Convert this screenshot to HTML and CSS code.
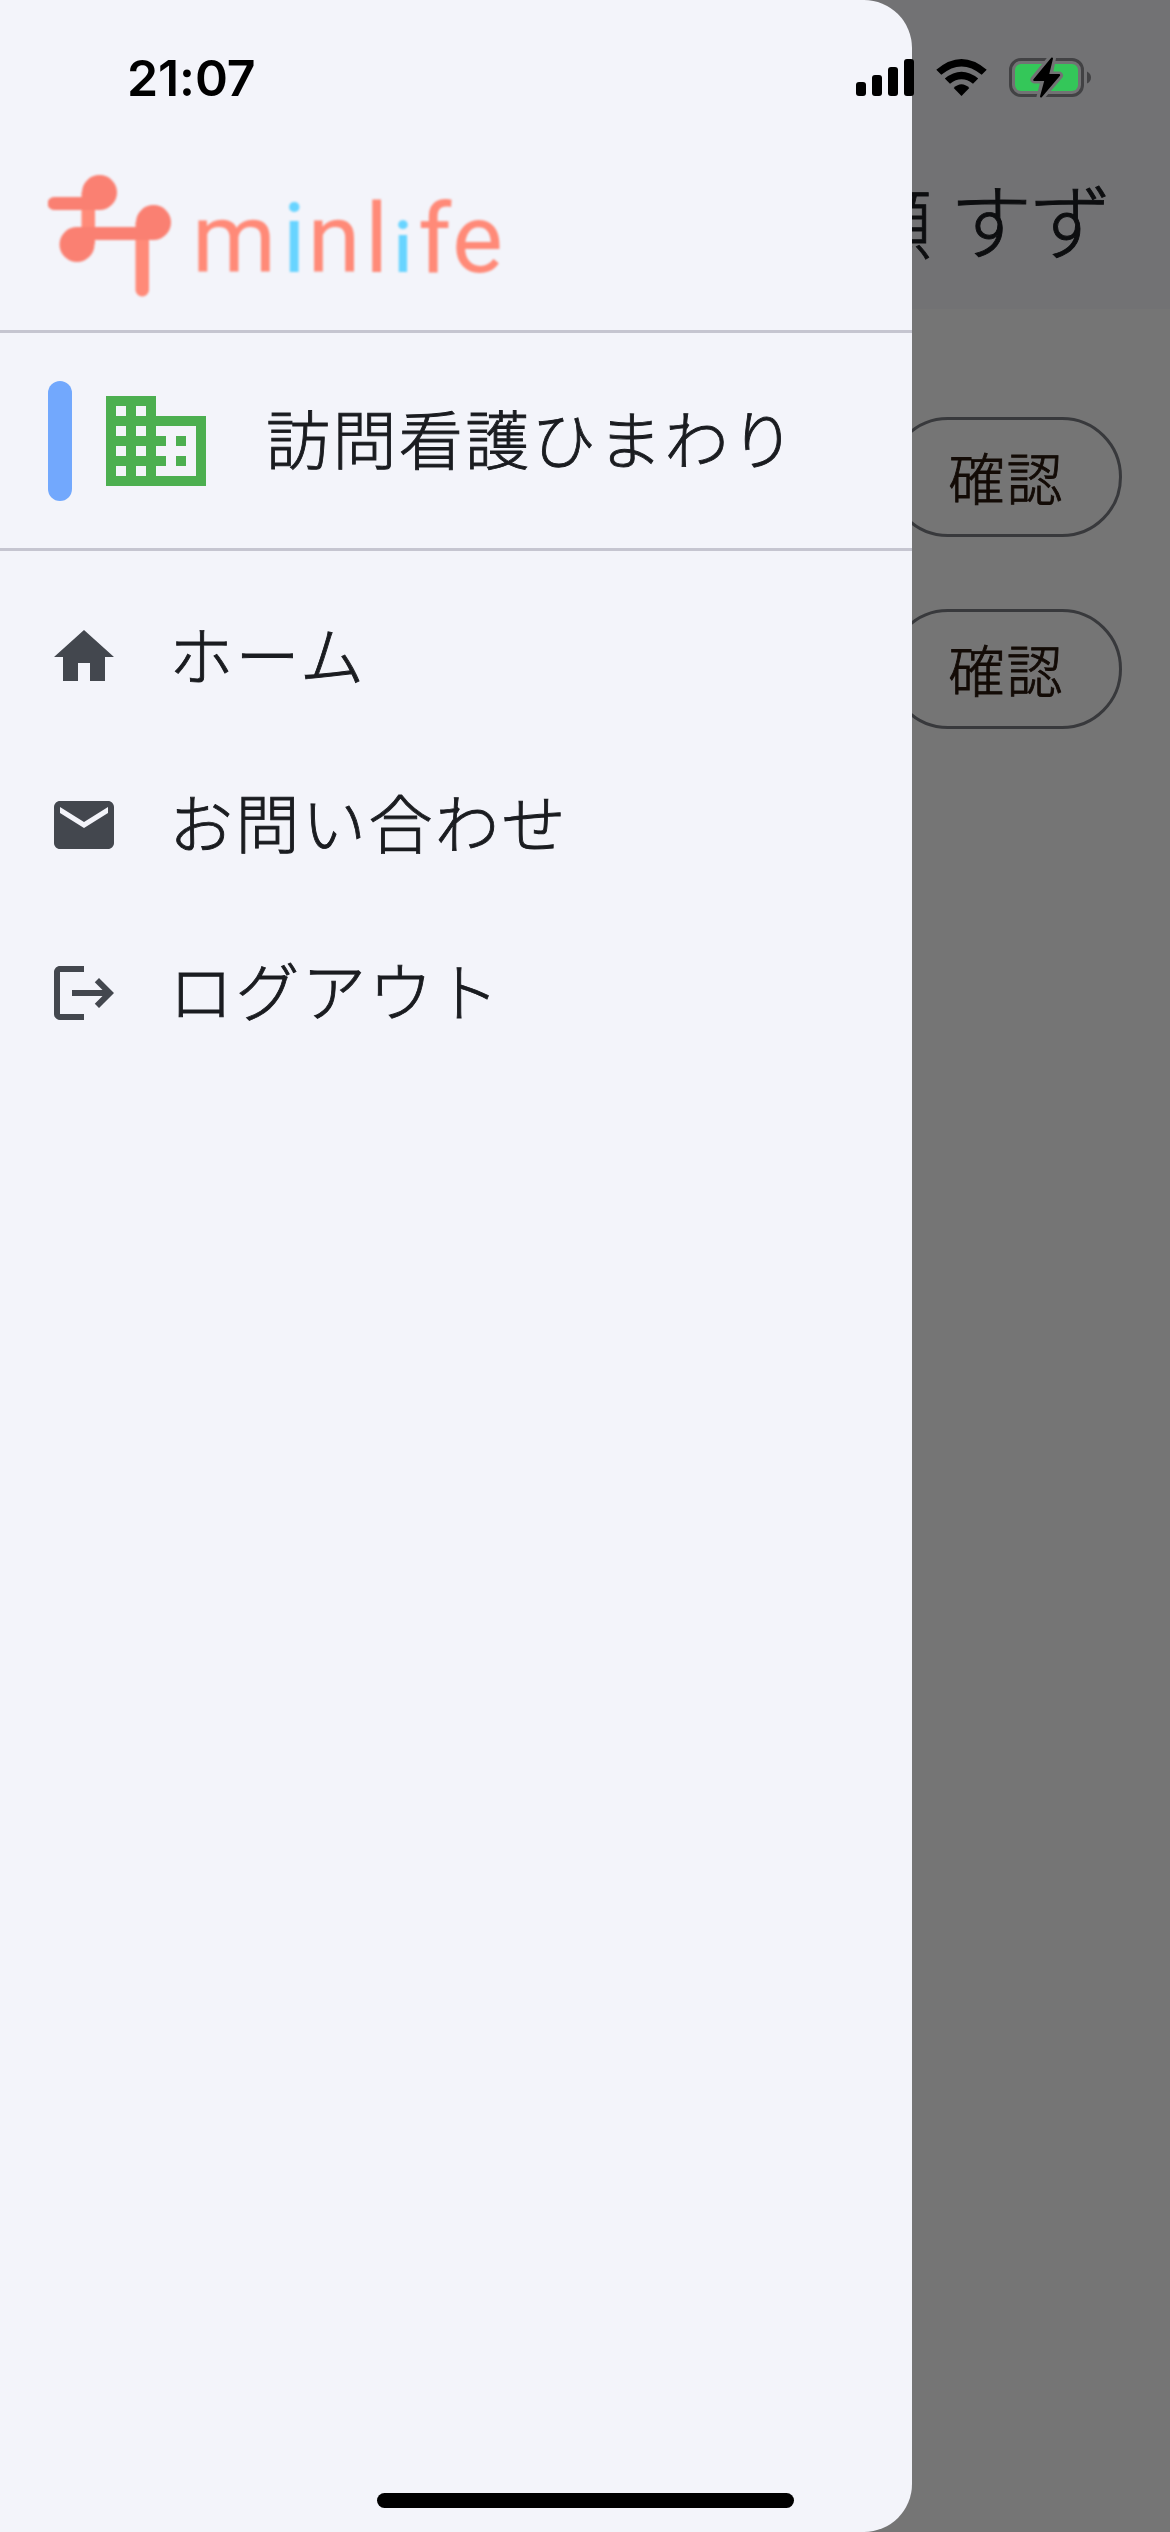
FILE: index.html
```html
<!DOCTYPE html>
<html lang="ja">
<head>
<meta charset="utf-8">
<title>minlife</title>
<link rel="stylesheet" href="styles.css">
</head>
<body>
<div class="screen">
  <main class="page">
    <header class="appbar"><h1 class="title"><span class="family-name">広瀬</span> すず</h1></header>
    <div class="actions">
      <button class="confirm">確認</button>
      <button class="confirm">確認</button>
    </div>
  </main>

  <aside class="drawer">
    <div class="brand">
      <svg class="logo" width="456" height="122" viewBox="48 175 456 122" role="img" aria-label="minlife">
        <g fill="#ff8a78">
          <rect x="81.500" y="192" width="13.500" height="52"/>
          <path d="M135.500 222h13.500v68a6.750 6.500 0 0 1-13.500 0z"/>
        </g>
        <g fill="#fa8072">
          <path d="M54 197h28v-4.500a17.500 17.500 0 1 1 17.500 17.500H54a6.500 6.500 0 0 1 0-13z"/>
          <path d="M77 227h59v-4.500a17.500 17.500 0 1 1 17.500 17.500H94.500v4.500A17.500 17.500 0 1 1 77 227z"/>
        </g>
        <g class="wordmark">
          <text class="coral" x="192" y="272">m</text>
          <text class="sky" x="282.500" y="272">i</text>
          <text class="coral" x="307.500" y="272">n</text>
          <text class="coral" x="365" y="272">l</text>
          <text class="sky small" x="394" y="272">i</text>
          <text class="coral" x="418" y="272">f</text>
          <text class="coral" x="452" y="272">e</text>
        </g>
      </svg>
    </div>
    <div class="office">
      <span class="marker"></span>
      <svg class="office-icon" viewBox="0 0 24 24"><path d="M12 7V3H2v18h20V7H12zM6 19H4v-2h2v2zm0-4H4v-2h2v2zm0-4H4V9h2v2zm0-4H4V5h2v2zm4 12H8v-2h2v2zm0-4H8v-2h2v2zm0-4H8V9h2v2zm0-4H8V5h2v2zm10 12h-8v-2h2v-2h-2v-2h2v-2h-2V9h8v10zm-2-8h-2v2h2v-2zm0 4h-2v2h2v-2z"/></svg>
      <span class="office-name">訪問看護ひまわり</span>
    </div>
    <nav class="menu">
      <a class="item"><svg class="icon" viewBox="0 0 24 24"><path d="M10 20v-6h4v6h5v-8h3L12 3 2 12h3v8z"/></svg><span class="label">ホーム</span></a>
      <a class="item"><svg class="icon" viewBox="0 0 24 24"><path d="M20 4H4c-1.100 0-1.990.9-1.990 2L2 18c0 1.100.9 2 2 2h16c1.100 0 2-.9 2-2V6c0-1.100-.9-2-2-2zm0 4l-8 5-8-5V6l8 5 8-5v2z"/></svg><span class="label">お問い合わせ</span></a>
      <a class="item"><svg class="icon" viewBox="0 0 24 24"><path d="M17 7l-1.410 1.410L18.170 11H8v2h10.170l-2.580 2.580L17 17l5-5zM4 5h8V3H4c-1.100 0-2 .9-2 2v14c0 1.100.9 2 2 2h8v-2H4V5z"/></svg><span class="label">ログアウト</span></a>
    </nav>
  </aside>

  <div class="statusbar">
    <span class="time">21:07</span>
    <svg class="indicators" width="240" height="44" viewBox="854 56 240 44">
      <rect x="856" y="82" width="10" height="14" rx="3"/>
      <rect x="872" y="75" width="10" height="21" rx="3"/>
      <rect x="888" y="67" width="10" height="29" rx="3"/>
      <rect x="904" y="59" width="10" height="37" rx="3"/>
      <path d="M936.300 69.800Q961.500 48.200 986.700 69.800L981.700 74.800Q961.500 58 941.300 74.800z"/>
      <path d="M944.800 78.500Q961.500 65 978.200 78.500L973 83.700Q961.500 75 950 83.700z"/>
      <path d="M953.700 88Q961.500 80.500 969.300 88L961.500 96z"/>
      <rect x="1010.500" y="59.500" width="72" height="36" rx="10.500" fill="none" stroke="#424244" stroke-width="3"/>
      <path d="M1087 71.500q4 2 4 6t-4 6z" fill="#424244"/>
      <rect x="1015" y="64" width="63" height="27" rx="6" fill="#34c759"/>
      <path class="bolt-gap" d="M1052 58L1034.500 79.500H1045L1040.500 97 1059 75.500H1048.500z"/>
      <path class="bolt" d="M1052 58.500L1034.200 80H1045.500L1041 96.500 1059.200 75H1048z"/>
    </svg>
  </div>
  <div class="home-indicator"></div>
</div>
</body>
</html>
```
FILE: styles.css
```css
* { box-sizing: border-box; }
body { margin: 0; }

.screen {
  position: relative;
  width: 1170px;
  height: 2532px;
  overflow: hidden;
  background: #757575;
  font-family: "Noto Sans CJK JP", sans-serif;
  font-weight: 300;
  color: #1a1c20;
  -webkit-text-stroke: 0.9px currentColor;
}

.appbar {
  display: flex;
  justify-content: flex-end;
  align-items: center;
  height: 309px;
  padding: 129px 60px 0 0;
  background: #727274;
}
.title {
  margin: 0;
  font-size: 82px;
  line-height: 168px;
  font-weight: 300;
  letter-spacing: -2px;
  word-spacing: 1px;
  color: #0d0e10;
}
.family-name { font-size: 76px; letter-spacing: 1px; }

.actions {
  display: flex;
  flex-direction: column;
  align-items: flex-end;
  gap: 72px;
  padding: 108px 48px 0 0;
}
.confirm {
  width: 234px;
  height: 120px;
  padding: 0 0 2px 3px;
  border: 3px solid #38393c;
  border-radius: 60px;
  background: none;
  font: inherit;
  font-size: 56px;
  line-height: 112px;
  letter-spacing: 2px;
  color: #130b06;
}

.drawer {
  position: absolute;
  inset: 0 auto 0 0;
  width: 912px;
  border-radius: 0 48px 48px 0;
  background: #f3f4fa;
}
.brand {
  height: 333px;
  padding: 175px 0 0 48px;
  border-bottom: 3px solid #c5c5d0;
}
.logo { display: block; filter: blur(0.8px); -webkit-text-stroke: 0; }
.wordmark { font-family: Roboto, sans-serif; font-size: 96px; font-weight: 400; }
.coral { fill: #ff8a78; }
.sky { fill: #68d4ff; }
.small { font-size: 70px; font-weight: 500; }

.office {
  display: flex;
  align-items: center;
  height: 218px;
  padding: 1px 0 0 48px;
  border-bottom: 3px solid #c5c5d0;
}
.marker { width: 24px; height: 120px; border-radius: 12px; background: #72a8fd; }
.office-icon { width: 120px; height: 120px; margin-left: 24px; fill: #4caf50; }
.office-name {
  margin-left: 50px;
  padding-bottom: 11px;
  font-size: 64px;
  line-height: 84px;
  letter-spacing: 2.4px;
}

.menu { padding-top: 22px; }
.item {
  display: flex;
  align-items: center;
  gap: 49px;
  height: 168px;
  padding-left: 48px;
  font-size: 64px;
  letter-spacing: 2.5px;
}
.label { padding-bottom: 10px; line-height: 84px; }
.icon { width: 72px; height: 72px; fill: #43474e; }

.statusbar {
  position: absolute;
  inset: 0 0 auto 0;
  display: flex;
  justify-content: space-between;
  align-items: center;
  height: 156px;
  padding: 0 76px 0 127px;
  -webkit-text-stroke: 0;
}
.time {
  font: 600 50px/60px Inter, sans-serif;
  letter-spacing: -0.1px;
  color: #000;
}
.bolt-gap { fill: #727274; stroke: #727274; stroke-width: 8; stroke-linejoin: round; }
.bolt { stroke: #000; stroke-width: 2; stroke-linejoin: round; }

.home-indicator {
  position: absolute;
  left: 377px;
  bottom: 24px;
  width: 417px;
  height: 15px;
  border-radius: 8px;
  background: #000;
}
```
